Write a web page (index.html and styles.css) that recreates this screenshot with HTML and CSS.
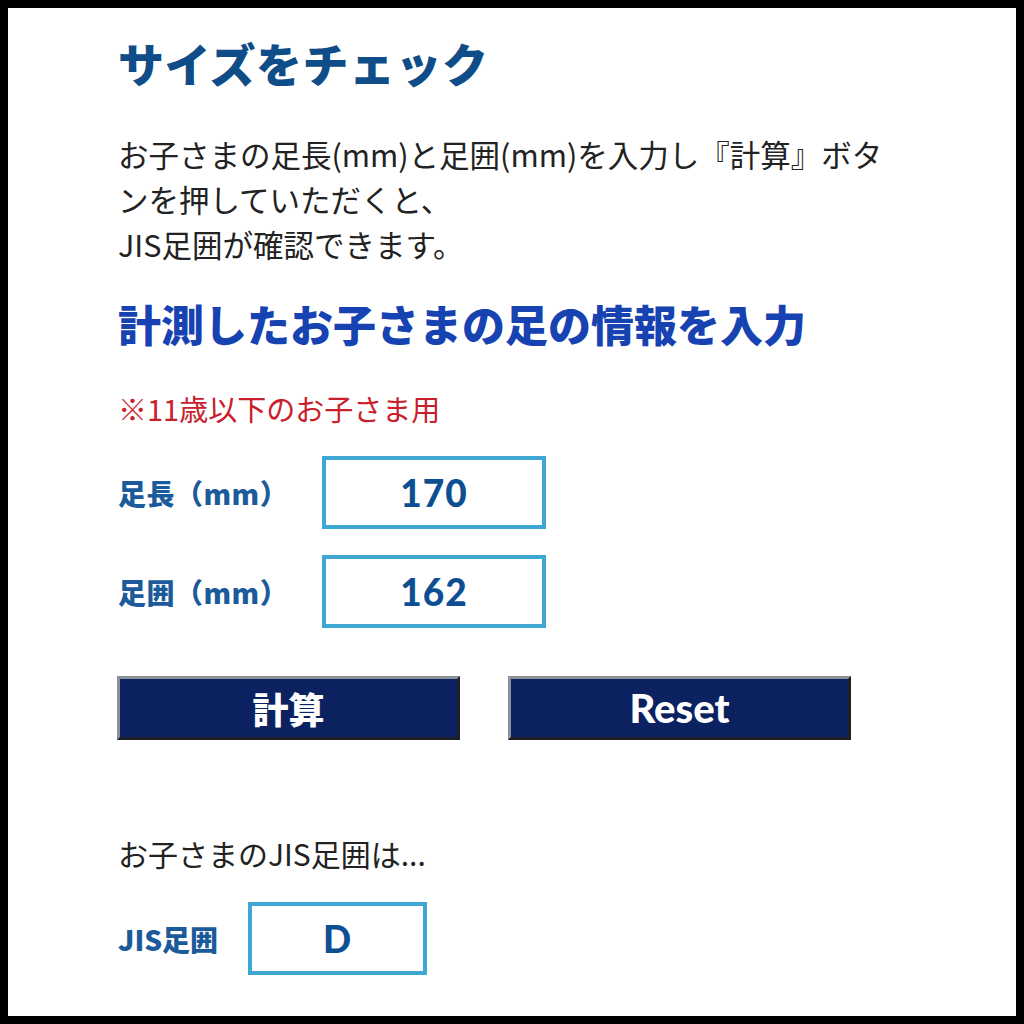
FILE: index.html
```html
<!DOCTYPE html>
<html lang="ja">
<head>
<meta charset="utf-8">
<title>サイズをチェック</title>
<link rel="stylesheet" href="styles.css">
</head>
<body>
<div class="page">
  <h1 class="title">サイズをチェック</h1>
  <p class="lead">お子さまの足長(mm)と足囲(mm)を入力し『計算』ボタンを押していただくと、<br>JIS足囲が確認できます。</p>
  <h2 class="subtitle">計測したお子さまの足の情報を入力</h2>
  <p class="note">※11歳以下のお子さま用</p>
  <div class="field">
    <span class="label">足長（mm）</span>
    <div class="box"><span class="num">170</span></div>
  </div>
  <div class="field field-second">
    <span class="label">足囲（mm）</span>
    <div class="box"><span class="num">162</span></div>
  </div>
  <div class="buttons">
    <button class="btn btn-jp">計算</button>
    <button class="btn btn-en">Reset</button>
  </div>
  <p class="result-text">お子さまのJIS足囲は...</p>
  <div class="field field-result">
    <span class="label label-jis">JIS足囲</span>
    <div class="box box-small"><span class="num">D</span></div>
  </div>
</div>
</body>
</html>
```
FILE: styles.css
```css
html, body {
  margin: 0;
  padding: 0;
}
body {
  background: #000;
  padding: 8px;
  box-sizing: border-box;
  width: 1024px;
  height: 1024px;
  font-family: "Noto Sans CJK JP", "Noto Sans", sans-serif;
}
.page {
  background: #fff;
  height: 1008px;
  box-sizing: border-box;
  padding: 27px 0 0 110px;
  overflow: hidden;
}
.title {
  margin: 0;
  font-size: 46px;
  line-height: 55px;
  font-weight: 900;
  color: #0f4d88;
  letter-spacing: 0.5px;
}
.lead {
  margin: 42px 0 0;
  width: 790px;
  font-size: 30.5px;
  line-height: 45px;
  color: #222;
  font-weight: 400;
}
.subtitle {
  margin: 30px 0 0;
  font-size: 43px;
  line-height: 53px;
  font-weight: 900;
  color: #1742b2;
}
.note {
  margin: 38px 0 0;
  font-size: 29px;
  line-height: 40px;
  color: #c8202c;
}
.field {
  margin-top: 28px;
  display: flex;
  align-items: center;
}
.field-second {
  margin-top: 26px;
}
.label {
  width: 204px;
  font-size: 28px;
  font-weight: 900;
  color: #1b5a9b;
  letter-spacing: 0.5px;
}
.label-jis {
  width: 130px;
  font-size: 28px;
  letter-spacing: 0;
}
.box {
  width: 224px;
  height: 73px;
  box-sizing: border-box;
  border: 4px solid #3ea7d3;
  display: flex;
  align-items: center;
  justify-content: center;
}
.box-small {
  width: 179px;
}
.num {
  font-family: "Lato", "Noto Sans", sans-serif;
  font-weight: 900;
  font-size: 37px;
  color: #0e4f94;
  letter-spacing: 1px;
}
.buttons {
  margin-top: 48px;
  display: flex;
  gap: 48px;
  margin-left: -1px;
}
.btn {
  width: 343px;
  height: 64px;
  box-sizing: border-box;
  background: #0b2160;
  border-style: solid;
  border-width: 3px;
  border-color: #8a8f99 #1c1f26 #1c1f26 #8a8f99;
  color: #fff;
  font-weight: 700;
  padding: 0;
  display: flex;
  align-items: center;
  justify-content: center;
}
.btn-jp {
  font-family: "Noto Sans CJK JP", sans-serif;
  font-weight: 900;
  font-size: 36px;
}
.btn-en {
  font-family: "Lato", "Noto Sans", sans-serif;
  font-weight: 900;
  font-size: 40px;
}
.result-text {
  margin: 93px 0 0;
  font-size: 30px;
  line-height: 40px;
  color: #222;
}
.field-result {
  margin-top: 29px;
}
```
